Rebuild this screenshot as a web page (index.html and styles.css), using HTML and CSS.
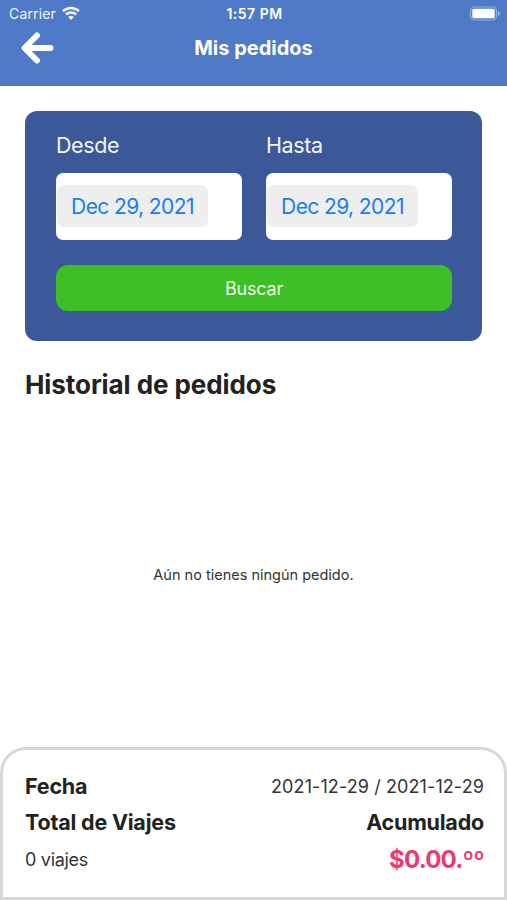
FILE: index.html
```html
<!DOCTYPE html>
<html lang="es">
<head>
  <meta charset="UTF-8">
  <meta name="viewport" content="width=device-width, initial-scale=1.0">
  <title>Mis pedidos</title>
  <link rel="stylesheet" href="styles.css">
</head>
<body>

  <header class="header">
    <div class="status-bar">
      <div class="carrier">
        <span>Carrier</span>
        <svg class="wifi" width="18" height="14" viewBox="0 0 18 14" fill="none" stroke="#fff" stroke-width="2.5">
          <path d="M1 5.2a11.5 11.5 0 0 1 16 0"/>
          <path d="M3.9 8.5a7.3 7.3 0 0 1 10.2 0"/>
          <path d="M9 14l-2.8-2.9a4 4 0 0 1 5.6 0z" fill="#fff" stroke="none"/>
        </svg>
      </div>
      <span class="time">1:57 PM</span>
      <svg class="battery" width="31" height="15" viewBox="0 0 31 15">
        <rect x="1.5" y="1" width="26" height="13" rx="4" fill="none" stroke="#fff" stroke-opacity=".4" stroke-width="1.2"/>
        <rect x="3.3" y="2.8" width="22.4" height="9.4" rx="1.5" fill="#fff"/>
        <path d="M29 5v5c1-.4 1.7-1.4 1.7-2.5S30 5.4 29 5z" fill="#fff" fill-opacity=".5"/>
      </svg>
    </div>
    <div class="nav">
      <svg class="back" width="34" height="32" viewBox="0 0 34 32" fill="none" stroke="#fff" stroke-width="6" stroke-linecap="round" stroke-linejoin="round">
        <path d="M17 3.500L4.500 16 17 28.500M5 16H30.500"/>
      </svg>
      <h1>Mis pedidos</h1>
    </div>
  </header>

  <main class="content">
    <!-- Filtro por fechas -->
    <form class="filter">
      <div class="dates">
        <div class="field">
          <label>Desde</label>
          <div class="date-box"><span class="date">Dec 29, 2021</span></div>
        </div>
        <div class="field">
          <label>Hasta</label>
          <div class="date-box"><span class="date">Dec 29, 2021</span></div>
        </div>
      </div>
      <button type="button" class="search">Buscar</button>
    </form>

    <h2>Historial de pedidos</h2>
    <p class="empty">Aún no tienes ningún pedido.</p>
  </main>

  <!-- Resumen -->
  <footer class="summary">
    <div class="row">
      <strong>Fecha</strong>
      <span class="range">2021-12-29 / 2021-12-29</span>
    </div>
    <div class="row">
      <strong>Total de Viajes</strong>
      <strong>Acumulado</strong>
    </div>
    <div class="row last">
      <span class="trips">0 viajes</span>
      <span class="total">$0.00.ºº</span>
    </div>
  </footer>

</body>
</html>
```

FILE: styles.css
```css
* {
  box-sizing: border-box;
}
body {
  margin: 0;
  height: 900px;
  display: flex;
  flex-direction: column;
  overflow: hidden;
  background-color: white;
  color: #222;
  font-family: Inter, "Liberation Sans", sans-serif;
}
h1, h2, p {
  margin: 0;
}
.header {
  height: 86px;
  background-color: #4e7ac7;
  color: white;
}
.status-bar {
  display: grid;
  grid-template-columns: 1fr auto 1fr;
  align-items: center;
  height: 27px;
  padding: 0 7px 0 9px;
  font-size: 14px;
}
.carrier {
  display: flex;
  align-items: center;
  gap: 6px;
  letter-spacing: 0.15px;
  opacity: 0.93;
}
.wifi {
  margin-top: -2px;
}
.time {
  font-weight: 600;
  letter-spacing: 0.5px;
}
.battery {
  justify-self: end;
}
.nav {
  display: grid;
  grid-template-columns: 34px 1fr 34px;
  align-items: center;
  height: 42px;
  padding: 0 20px;
}
.nav h1 {
  font-size: 20px;
  font-weight: 650;
  text-align: center;
}
.content {
  flex: 1;
  padding: 25px 25px 0;
}
/* Tarjeta del filtro */
.filter {
  height: 230px;
  padding: 20px 30px 0 31px;
  border-radius: 12px;
  background-color: #3b5998;
}
.dates {
  display: grid;
  grid-template-columns: 1fr 1fr;
  gap: 24px;
}
.field label {
  display: block;
  height: 42px;
  line-height: 28px;
  color: #f2f5ff;
  font-size: 21.5px;
  letter-spacing: -0.4px;
}
.date-box {
  display: flex;
  align-items: center;
  height: 67px;
  padding-left: 1px;
  border-radius: 7px;
  background-color: white;
}
.date {
  width: 151px;
  height: 42px;
  margin-top: -1px;
  border-radius: 7px;
  background-color: #eee;
  color: #147efb;
  font-size: 21px;
  letter-spacing: -0.6px;
  line-height: 44px;
  text-align: center;
}
.search {
  display: block;
  width: 100%;
  height: 46px;
  margin-top: 25px;
  padding: 0;
  border: none;
  border-radius: 12px;
  background-color: #3dbf25;
  color: #effbea;
  font-family: inherit;
  font-size: 18px;
  letter-spacing: -0.2px;
}
h2 {
  margin-top: 27px;
  font-size: 26px;
  font-weight: 650;
  letter-spacing: -0.07px;
  line-height: 34px;
}
.empty {
  margin-top: 163px;
  color: #333;
  font-size: 14.5px;
  line-height: 20px;
  text-align: center;
}
.summary {
  height: 153px;
  padding: 18px 20px 0 22px;
  border: 3px solid #d8d8d8;
  border-radius: 26px 26px 0 0;
}
.row {
  display: flex;
  justify-content: space-between;
  align-items: center;
  height: 36px;
}
.row strong {
  font-size: 21.5px;
  font-weight: 650;
  letter-spacing: -0.2px;
}
.row.last {
  height: 39px;
}
.range, .trips {
  color: #333;
  font-size: 18px;
}
.range {
  letter-spacing: 0.1px;
}
.trips {
  letter-spacing: -0.3px;
}
.total {
  color: #f0386f;
  font-size: 24px;
  font-weight: 650;
  letter-spacing: -0.8px;
}
```
